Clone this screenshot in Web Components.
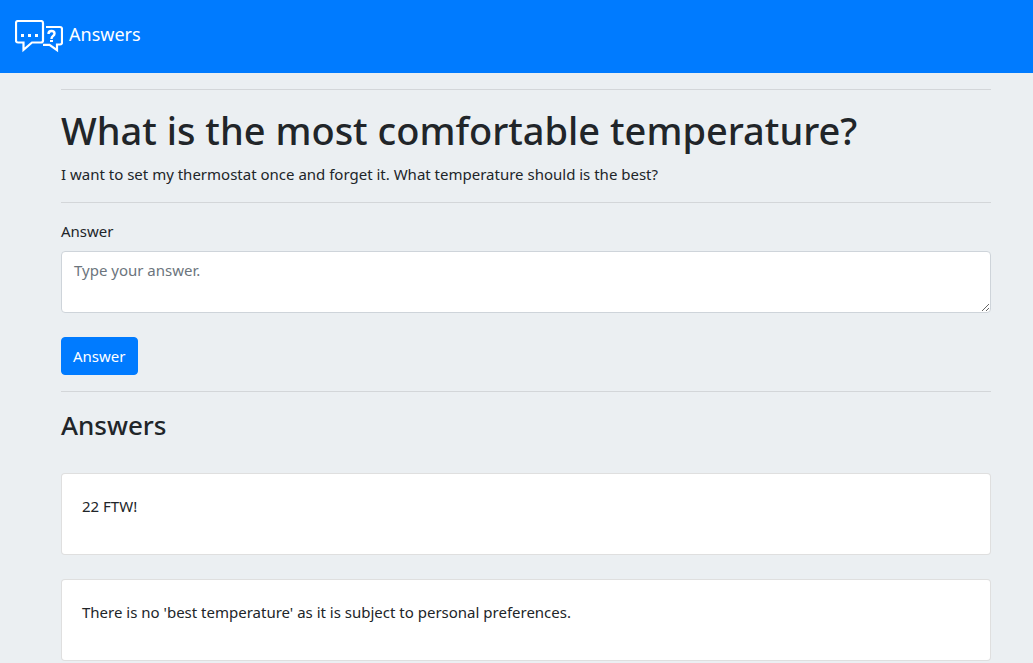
<!DOCTYPE html>
<html lang="en">
<head>
<meta charset="utf-8">
<meta name="viewport" content="width=device-width, initial-scale=1">
<title>Answers</title>
<style>
  body { margin: 0; background: #ebeff2; color: #212529; font: 400 15px/24px "Noto Sans", "Open Sans", sans-serif; }
</style>
</head>
<body>
<site-header></site-header>
<question-page>
  <question-head>
    <span slot="title">What is the most comfortable temperature?</span>
    I want to set my thermostat once and forget it. What temperature should is the best?
  </question-head>
  <answer-form></answer-form>
  <answer-list>
    <answer-card>22 FTW!</answer-card>
    <answer-card>There is no 'best temperature' as it is subject to personal preferences.</answer-card>
  </answer-list>
</question-page>
<script>
const component = (name, html) => {
  const template = document.createElement('template');
  template.innerHTML = html;
  customElements.define(name, class extends HTMLElement {
    constructor() {
      super();
      this.attachShadow({ mode: 'open' }).append(template.content.cloneNode(true));
    }
  });
};

component('site-logo', `
  <style>
    :host { display: block; width: 48px; height: 33px; }
    svg { display: block; }
  </style>
  <svg width="48" height="33" viewBox="0 0 48 33" fill="none" stroke="#fff" stroke-width="2.200" stroke-miterlimit="10" aria-hidden="true">
    <path d="M3 1H26Q28 1 28 3V20.500Q28 22.500 26 22.500H17L8.500 29.800V22.500H3Q1 22.500 1 20.500V3Q1 1 3 1Z"/>
    <path d="M31 7H45Q47 7 47 9V22.500Q47 24.500 45 24.500H42V30.200L34.500 24.800H28"/>
    <path d="M6 14h3v3H6zM13 14h3v3h-3zM20 14h3v3h-3z" fill="#fff" stroke="none"/>
    <path d="M33.500 14Q33.500 11 36.500 11Q39.500 11 39.500 13.500Q39.500 15 38 16Q36.500 17 36.500 19" stroke-width="2.400"/>
    <path d="M35 20h3v2h-3z" fill="#fff" stroke="none"/>
  </svg>`);

component('site-header', `
  <style>
    :host { display: block; background: #007bff; }
    nav { display: flex; padding: 20px 15px; }
    a { display: flex; gap: 6px; color: #fff; font-size: 18px; line-height: 28px; text-decoration: none; }
  </style>
  <nav><a href="#"><site-logo></site-logo><span>Answers</span></a></nav>`);

component('question-page', `
  <style>
    :host { display: block; padding: 16px 42px 2px 61px; }
  </style>
  <slot></slot>`);

component('question-head', `
  <style>
    :host { display: block; border: solid rgba(0,0,0,.1); border-width: 1px 0; padding: 16px 0; }
    h1 { margin: 0 0 8px; font-size: 38px; line-height: 48px; font-weight: 500; }
    p { margin: 0; }
  </style>
  <h1><slot name="title"></slot></h1>
  <p><slot></slot></p>`);

component('answer-form', `
  <style>
    :host { display: block; border-bottom: 1px solid rgba(0,0,0,.1); padding: 16px 0; }
    label { display: block; margin-bottom: 8px; }
    textarea { display: block; box-sizing: border-box; width: 100%; height: 62px; margin: 0 0 24px; padding: 6px 12px;
      border: 1px solid #ced4da; border-radius: 4px; background: #fff; color: #495057; font: inherit; resize: vertical; overflow: auto; }
    textarea::placeholder { color: #6c757d; opacity: 1; }
    button { display: block; margin: 0; padding: 6px 11px; border: 1px solid #007bff; border-radius: 4px;
      background: #007bff; color: #fff; font: inherit; cursor: pointer; }
  </style>
  <form>
    <label for="answer">Answer</label>
    <textarea id="answer" rows="2" placeholder="Type your answer."></textarea>
    <button type="button">Answer</button>
  </form>`);

component('answer-list', `
  <style>
    :host { display: block; padding-top: 16px; }
    h3 { margin: 0; padding-bottom: 31px; font-size: 26px; line-height: 34px; font-weight: 500; }
    div { display: grid; gap: 24px; }
  </style>
  <h3>Answers</h3>
  <div><slot></slot></div>`);

component('answer-card', `
  <style>
    :host { display: block; padding: 20px; border: 1px solid rgba(0,0,0,.125); border-radius: 4px; background: #fff; }
    p { margin: 0 0 16px; }
  </style>
  <p><slot></slot></p>`);
</script>
</body>
</html>
